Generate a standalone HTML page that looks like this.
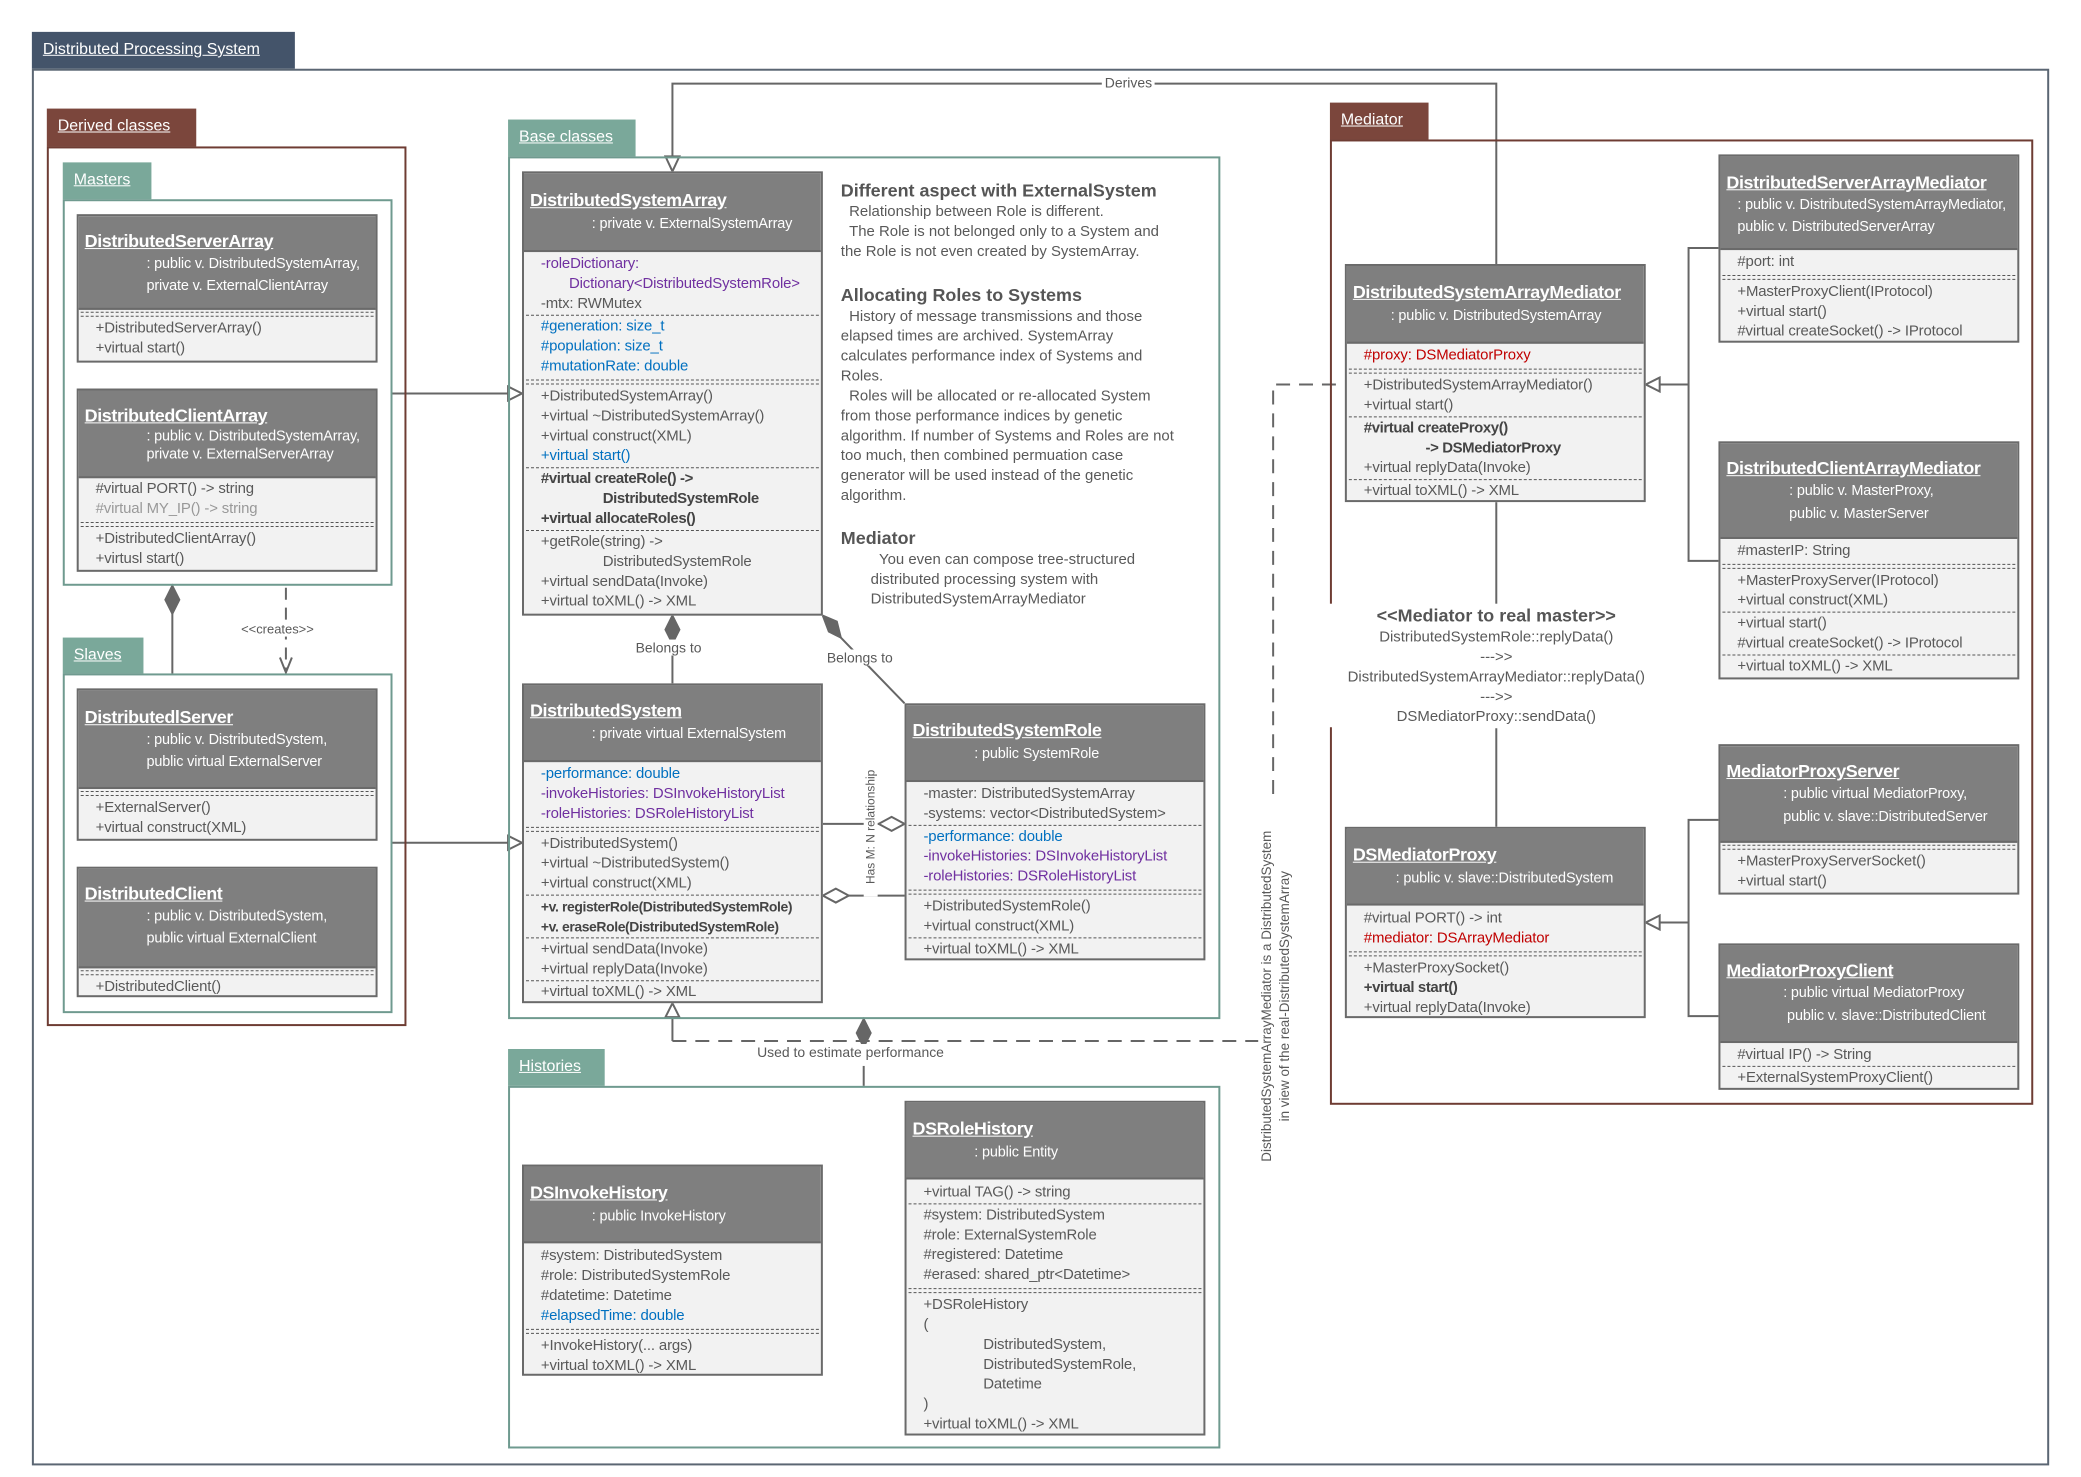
<!DOCTYPE html>
<html><head><meta charset="utf-8">
<style>
*{margin:0;padding:0;box-sizing:border-box}
body{width:2081px;height:1477px;background:#fff;position:relative;overflow:hidden;font-family:"Liberation Sans Narrow","Liberation Sans",sans-serif;color:#595959}
#w{position:absolute;left:0;top:0;width:2081px;height:1477px;transform:scale(0.9962);transform-origin:0 0}
.a{position:absolute}
.tab{position:absolute;color:#fff;font-size:16px;text-decoration:underline;padding:9px 10px 0 11px;white-space:nowrap}
.fr{position:absolute;border:2px solid}
.c{position:absolute;border:2px solid #6a6a6a;background:#f2f2f2;font-size:15px;overflow:hidden;white-space:nowrap;letter-spacing:-0.15px}
.h{background:#7f7f7f;color:#fff;border-bottom:2px solid #6a6a6a;padding-left:6px;overflow:hidden}
.t{font-weight:bold;font-size:18px;text-decoration:underline;line-height:24px;letter-spacing:-0.4px}
.s{font-size:14.5px}
.b{padding:0 0 0 17px}
.sec{line-height:20px;padding:1px 0}
.d{border-top:1.5px dashed #555;margin:0 2px 0 -15px}
.dd{height:5px;border-top:1.5px dashed #555;border-bottom:1.5px dashed #555;margin:2px 2px 1px -15px}
.bl{color:#0070c0}.pu{color:#7030a0}.re{color:#c00000}.bo{font-weight:bold;color:#444;letter-spacing:-0.4px}.lt{color:#999}
.note{position:absolute;font-size:15px;line-height:20px;color:#595959}
.note b{font-size:18px;color:#555;display:block;line-height:24px}
.lbl{position:absolute;font-size:14px;color:#595959;background:#fff;white-space:nowrap}
</style></head><body><div id="w">

<svg class="a" style="left:0;top:0" width="2081" height="1477">
<g stroke="#666" stroke-width="2" fill="none">
<polyline points="1502,265 1502,84 675,84 675,160"/>
<polygon points="668,157 682,157 675,172" fill="#fff"/>
<line x1="394" y1="395" x2="510" y2="395"/>
<polygon points="510,388 524,395 510,402" fill="#fff"/>
<line x1="394" y1="846" x2="510" y2="846"/>
<polygon points="510,839 524,846 510,853" fill="#fff"/>
<line x1="173" y1="615" x2="173" y2="676"/>
<polygon points="173,588 180,602 173,616 166,602" fill="#666"/>
<line x1="287" y1="590" x2="287" y2="674" stroke-dasharray="12,8"/>
<polyline points="281,660 287,675 293,660"/>
<polygon points="675,618 682,632 675,646 668,632" fill="#666"/>
<line x1="675" y1="646" x2="675" y2="686"/>
<polygon points="826,618 840,624 844,640 832,634" fill="#666"/>
<line x1="844" y1="640" x2="908" y2="706"/>
<line x1="826" y1="827" x2="882" y2="827"/>
<polygon points="908,827 895,820 882,827 895,834" fill="#fff"/>
<line x1="852" y1="899" x2="908" y2="899"/>
<polygon points="826,899 839,892 852,899 839,906" fill="#fff"/>
<line x1="675" y1="1021" x2="675" y2="1045"/>
<polygon points="668,1021 682,1021 675,1007" fill="#fff"/>
<polyline points="675,1045 1278,1045 1278,386 1350,386" stroke-dasharray="14,9"/>
<polygon points="867,1023 874,1037 867,1051 860,1037" fill="#666"/>
<line x1="867" y1="1070" x2="867" y2="1090"/>
<line x1="1502" y1="504" x2="1502" y2="607"/>
<line x1="1502" y1="731" x2="1502" y2="830"/>
<polyline points="1725,249 1695,249 1695,563 1725,563"/>
<line x1="1666" y1="386" x2="1695" y2="386"/>
<polygon points="1666,379 1652,386 1666,393" fill="#fff"/>
<polyline points="1725,823 1695,823 1695,1020 1725,1020"/>
<line x1="1666" y1="926" x2="1695" y2="926"/>
<polygon points="1666,919 1652,926 1666,933" fill="#fff"/>
</g>
</svg>

<div class="tab" style="left:32px;top:32px;width:264px;height:37px;background:#44546a">Distributed Processing System</div>
<div class="fr" style="left:32px;top:69px;width:2025px;height:1402px;border-color:#5b6673"></div>
<div class="tab" style="left:47px;top:109px;width:150px;height:38px;background:#7b463c">Derived classes</div>
<div class="fr" style="left:47px;top:147px;width:361px;height:883px;border-color:#6e3c33"></div>
<div class="tab" style="left:63px;top:163px;width:89px;height:37px;background:#7aa89a">Masters</div>
<div class="fr" style="left:63px;top:200px;width:331px;height:388px;border-color:#6f9a8f"></div>
<div class="tab" style="left:63px;top:640px;width:81px;height:36px;background:#7aa89a">Slaves</div>
<div class="fr" style="left:63px;top:676px;width:331px;height:341px;border-color:#6f9a8f"></div>
<div class="tab" style="left:510px;top:120px;width:128px;height:37px;background:#7aa89a">Base classes</div>
<div class="fr" style="left:510px;top:157px;width:715px;height:866px;border-color:#6f9a8f"></div>
<div class="tab" style="left:510px;top:1053px;width:97px;height:37px;background:#7aa89a">Histories</div>
<div class="fr" style="left:510px;top:1090px;width:715px;height:364px;border-color:#6f9a8f"></div>
<div class="tab" style="left:1335px;top:103px;width:99px;height:37px;background:#7b463c">Mediator</div>
<div class="fr" style="left:1335px;top:140px;width:706px;height:969px;border-color:#6e3c33"></div>

<div class="lbl" style="left:1106px;top:75px;padding:0 3px">Derives</div>
<div class="lbl" style="left:240px;top:624px;padding:0 2px;font-family:'Liberation Sans',sans-serif;font-size:13px">&lt;&lt;creates&gt;&gt;</div>
<div class="lbl" style="left:638px;top:642px">Belongs to</div>
<div class="lbl" style="left:830px;top:652px">Belongs to</div>
<div class="lbl" style="left:760px;top:1048px">Used to estimate performance</div>
<div class="lbl" style="left:867px;top:830px;width:0;height:0;"><div style="position:absolute;left:-70px;top:0;width:140px;text-align:center;transform:rotate(-90deg);transform-origin:70px 0;font-family:'Liberation Sans',sans-serif;font-size:12px;background:#fff">Has M: N relationship</div></div>
<div class="a" style="left:1281px;top:1000px;width:0;height:0"><div style="position:absolute;left:-200px;top:-18px;width:400px;text-align:center;transform:rotate(-90deg);transform-origin:200px 18px;font-family:'Liberation Sans',sans-serif;font-size:13.5px;line-height:18px;color:#595959;background:#fff">DistributedSystemArrayMediator is a DistributedSystem<br>in view of the real-DistributedSystemArray</div></div>

<div class="a" style="left:1330px;top:606px;width:344px;text-align:center;font-size:15px;line-height:20px;background:#fff"><div style="font-weight:bold;font-size:18px;color:#555;line-height:24px">&lt;&lt;Mediator to real master&gt;&gt;</div>DistributedSystemRole::replyData()<br>---&gt;&gt;<br>DistributedSystemArrayMediator::replyData()<br>---&gt;&gt;<br>DSMediatorProxy::sendData()</div>

<div class="note" style="left:844px;top:179px;width:370px"><b>Different aspect with ExternalSystem</b>&nbsp;&nbsp;Relationship between Role is different.<br>&nbsp;&nbsp;The Role is not belonged only to a System and<br>the Role is not even created by SystemArray.</div>
<div class="note" style="left:844px;top:284px;width:370px"><b>Allocating Roles to Systems</b>&nbsp;&nbsp;History of message transmissions and those<br>elapsed times are archived. SystemArray<br>calculates performance index of Systems and<br>Roles.<br>&nbsp;&nbsp;Roles will be allocated or re-allocated System<br>from those performance indices by genetic<br>algorithm. If number of Systems and Roles are not<br>too much, then combined permuation case<br>generator will be used instead of the genetic<br>algorithm.</div>
<div class="note" style="left:844px;top:528px;width:370px"><b>Mediator</b><div style="padding-left:30px">&nbsp;&nbsp;You even can compose tree-structured<br>distributed processing system with<br>DistributedSystemArrayMediator</div></div>

<div class="c" style="left:77px;top:215px;width:302px;height:149px">
<div class="h" style="height:94px;padding-top:13px"><div class="t">DistributedServerArray</div><div class="s" style="padding-left:62px;line-height:22px">: public v. DistributedSystemArray,<br>private v. ExternalClientArray</div></div>
<div class="b"><div class="dd"></div><div class="sec">+DistributedServerArray()<br>+virtual start()</div></div></div>

<div class="c" style="left:77px;top:390px;width:302px;height:184px">
<div class="h" style="height:88px;padding-top:13px"><div class="t">DistributedClientArray</div><div class="s" style="padding-left:62px;line-height:18px">: public v. DistributedSystemArray,<br>private v. ExternalServerArray</div></div>
<div class="b"><div class="sec">#virtual PORT() -&gt; string<br><span class="lt">#virtual MY_IP() -&gt; string</span></div><div class="dd"></div><div class="sec">+DistributedClientArray()<br>+virtusl start()</div></div></div>

<div class="c" style="left:77px;top:691px;width:302px;height:153px">
<div class="h" style="height:99px;padding-top:15px"><div class="t">DistributedlServer</div><div class="s" style="padding-left:62px;line-height:22px">: public v. DistributedSystem,<br>public virtual ExternalServer</div></div>
<div class="b"><div class="dd"></div><div class="sec">+ExternalServer()<br>+virtual construct(XML)</div></div></div>

<div class="c" style="left:77px;top:870px;width:302px;height:131px">
<div class="h" style="height:100px;padding-top:13px"><div class="t">DistributedClient</div><div class="s" style="padding-left:62px;line-height:22px">: public v. DistributedSystem,<br>public virtual ExternalClient</div></div>
<div class="b"><div class="dd"></div><div class="sec">+DistributedClient()</div></div></div>

<div class="c" style="left:524px;top:172px;width:302px;height:446px">
<div class="h" style="height:79px;padding-top:15px"><div class="t">DistributedSystemArray</div><div class="s" style="padding-left:62px;line-height:24px">: private v. ExternalSystemArray</div></div>
<div class="b"><div class="sec" style="padding-top:2px"><span class="pu">-roleDictionary:<br>&nbsp;&nbsp;&nbsp;&nbsp;&nbsp;&nbsp;&nbsp;Dictionary&lt;DistributedSystemRole&gt;</span><br>-mtx: RWMutex</div><div class="d"></div>
<div class="sec bl">#generation: size_t<br>#population: size_t<br>#mutationRate: double</div><div class="dd"></div>
<div class="sec">+DistributedSystemArray()<br>+virtual ~DistributedSystemArray()<br>+virtual construct(XML)<br><span class="bl">+virtual start()</span></div><div class="d"></div>
<div class="sec bo">#virtual createRole() -&gt;<br><span style="padding-left:62px">DistributedSystemRole</span><br>+virtual allocateRoles()</div><div class="d"></div>
<div class="sec">+getRole(string) -&gt;<br><span style="padding-left:62px">DistributedSystemRole</span><br>+virtual sendData(Invoke)<br>+virtual toXML() -&gt; XML</div></div></div>

<div class="c" style="left:524px;top:686px;width:302px;height:321px">
<div class="h" style="height:77px;padding-top:13px"><div class="t">DistributedSystem</div><div class="s" style="padding-left:62px;line-height:24px">: private virtual ExternalSystem</div></div>
<div class="b"><div class="sec" style="padding-top:2px"><span class="bl">-performance: double</span><br><span class="pu">-invokeHistories: DSInvokeHistoryList<br>-roleHistories: DSRoleHistoryList</span></div><div class="dd"></div>
<div class="sec">+DistributedSystem()<br>+virtual ~DistributedSystem()<br>+virtual construct(XML)</div><div class="d"></div>
<div class="sec bo" style="font-size:14px">+v. registerRole(DistributedSystemRole)<br>+v. eraseRole(DistributedSystemRole)</div><div class="d"></div>
<div class="sec">+virtual sendData(Invoke)<br>+virtual replyData(Invoke)</div><div class="d"></div>
<div class="sec">+virtual toXML() -&gt; XML</div></div></div>

<div class="c" style="left:908px;top:706px;width:302px;height:258px">
<div class="h" style="height:77px;padding-top:13px"><div class="t">DistributedSystemRole</div><div class="s" style="padding-left:62px;line-height:24px">: public SystemRole</div></div>
<div class="b"><div class="sec" style="padding-top:2px">-master: DistributedSystemArray<br>-systems: vector&lt;DistributedSystem&gt;</div><div class="d"></div>
<div class="sec"><span class="bl">-performance: double</span><br><span class="pu">-invokeHistories: DSInvokeHistoryList<br>-roleHistories: DSRoleHistoryList</span></div><div class="dd"></div>
<div class="sec">+DistributedSystemRole()<br>+virtual construct(XML)</div><div class="d"></div>
<div class="sec">+virtual toXML() -&gt; XML</div></div></div>

<div class="c" style="left:524px;top:1169px;width:302px;height:212px">
<div class="h" style="height:77px;padding-top:14px"><div class="t">DSInvokeHistory</div><div class="s" style="padding-left:62px;line-height:24px">: public InvokeHistory</div></div>
<div class="b"><div class="sec" style="padding-top:3px">#system: DistributedSystem<br>#role: DistributedSystemRole<br>#datetime: Datetime<br><span class="bl">#elapsedTime: double</span></div><div class="dd"></div>
<div class="sec">+InvokeHistory(... args)<br>+virtual toXML() -&gt; XML</div></div></div>

<div class="c" style="left:908px;top:1105px;width:302px;height:336px">
<div class="h" style="height:77px;padding-top:14px"><div class="t">DSRoleHistory</div><div class="s" style="padding-left:62px;line-height:24px">: public Entity</div></div>
<div class="b"><div class="sec" style="padding-top:3px">+virtual TAG() -&gt; string</div><div class="d"></div>
<div class="sec">#system: DistributedSystem<br>#role: ExternalSystemRole<br>#registered: Datetime<br>#erased: shared_ptr&lt;Datetime&gt;</div><div class="dd"></div>
<div class="sec">+DSRoleHistory<br>(<br><span style="padding-left:60px">DistributedSystem,</span><br><span style="padding-left:60px">DistributedSystemRole,</span><br><span style="padding-left:60px">Datetime</span><br>)<br>+virtual toXML() -&gt; XML</div></div></div>

<div class="c" style="left:1350px;top:265px;width:302px;height:239px">
<div class="h" style="height:78px;padding-top:14px"><div class="t">DistributedSystemArrayMediator</div><div class="s" style="padding-left:38px;line-height:24px">: public v. DistributedSystemArray</div></div>
<div class="b"><div class="sec re" style="padding-top:2px">#proxy: DSMediatorProxy</div><div class="dd"></div>
<div class="sec">+DistributedSystemArrayMediator()<br>+virtual start()</div><div class="d"></div>
<div class="sec"><span class="bo">#virtual createProxy()<br><span style="padding-left:62px">-&gt; DSMediatorProxy</span></span><br>+virtual replyData(Invoke)</div><div class="d"></div>
<div class="sec">+virtual toXML() -&gt; XML</div></div></div>

<div class="c" style="left:1725px;top:155px;width:302px;height:189px">
<div class="h" style="height:94px;padding-top:14px"><div class="t">DistributedServerArrayMediator</div><div class="s" style="padding-left:11px;line-height:22px">: public v. DistributedSystemArrayMediator,<br>public v. DistributedServerArray</div></div>
<div class="b"><div class="sec" style="padding-top:2px">#port: int</div><div class="dd"></div>
<div class="sec">+MasterProxyClient(IProtocol)<br>+virtual start()<br>#virtual createSocket() -&gt; IProtocol</div></div></div>

<div class="c" style="left:1725px;top:443px;width:302px;height:239px">
<div class="h" style="height:96px;padding-top:13px"><div class="t">DistributedClientArrayMediator</div><div class="s" style="padding-left:63px;line-height:23px">: public v. MasterProxy,<br>public v. MasterServer</div></div>
<div class="b"><div class="sec" style="padding-top:2px">#masterIP: String</div><div class="dd"></div>
<div class="sec">+MasterProxyServer(IProtocol)<br>+virtual construct(XML)</div><div class="d"></div>
<div class="sec">+virtual start()<br>#virtual createSocket() -&gt; IProtocol</div><div class="d"></div>
<div class="sec">+virtual toXML() -&gt; XML</div></div></div>

<div class="c" style="left:1350px;top:830px;width:302px;height:192px">
<div class="h" style="height:77px;padding-top:14px"><div class="t">DSMediatorProxy</div><div class="s" style="padding-left:43px;line-height:24px">: public v. slave::DistributedSystem</div></div>
<div class="b"><div class="sec" style="padding-top:3px">#virtual PORT() -&gt; int<br><span class="re">#mediator: DSArrayMediator</span></div><div class="dd"></div>
<div class="sec">+MasterProxySocket()<br><span class="bo">+virtual start()</span><br>+virtual replyData(Invoke)</div></div></div>

<div class="c" style="left:1725px;top:747px;width:302px;height:151px">
<div class="h" style="height:97px;padding-top:13px"><div class="t">MediatorProxyServer</div><div class="s" style="padding-left:57px;line-height:23px">: public virtual MediatorProxy,<br>public v. slave::DistributedServer</div></div>
<div class="b"><div class="dd"></div><div class="sec">+MasterProxyServerSocket()<br>+virtual start()</div></div></div>

<div class="c" style="left:1725px;top:947px;width:302px;height:147px">
<div class="h" style="height:98px;padding-top:13px"><div class="t">MediatorProxyClient</div><div class="s" style="padding-left:57px;line-height:23px">: public virtual MediatorProxy<br>&nbsp;public v. slave::DistributedClient</div></div>
<div class="b"><div class="sec" style="padding-top:2px">#virtual IP() -&gt; String</div><div class="d"></div>
<div class="sec">+ExternalSystemProxyClient()</div></div></div>

</div></body></html>
